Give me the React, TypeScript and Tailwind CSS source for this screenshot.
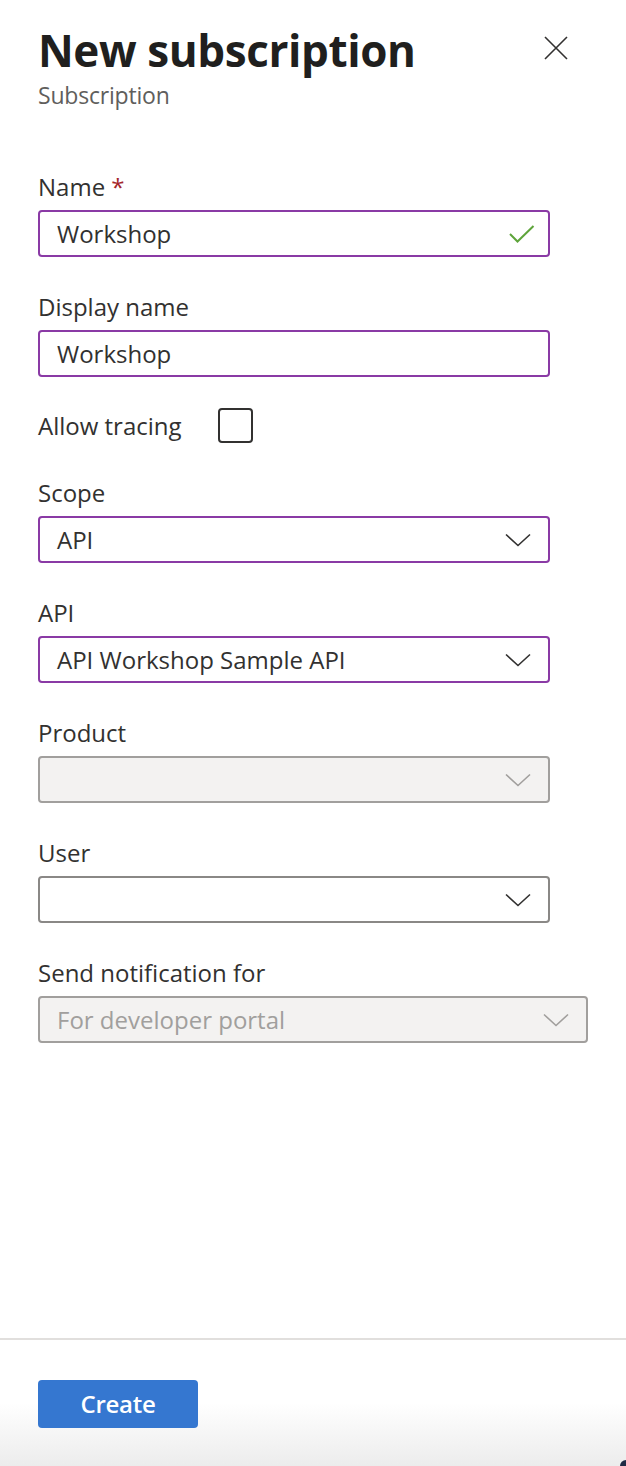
import React from "react";

const font = { fontFamily: '"Open Sans", "Noto Sans", sans-serif' };

function Chevron({ color }: { color: string }) {
  return (
    <svg width="26" height="14" viewBox="0 0 26 14" fill="none">
      <path d="M1 1.5 L13 12.5 L25 1.5" stroke={color} strokeWidth="1.6" />
    </svg>
  );
}

function Label({ children }: { children: React.ReactNode }) {
  return <div className="text-[24px] leading-[30px] text-[#323130]">{children}</div>;
}

function Field({
  value,
  variant = "active",
  wide = false,
  chevron = true,
  check = false,
}: {
  value?: string;
  variant?: "active" | "disabled" | "plain";
  wide?: boolean;
  chevron?: boolean;
  check?: boolean;
}) {
  const border =
    variant === "active"
      ? "border-[#8a3aa5] bg-white"
      : variant === "disabled"
      ? "border-[#a19f9d] bg-[#f3f2f1]"
      : "border-[#8a8886] bg-white";
  return (
    <div
      className={`mt-2 h-[47px] ${wide ? "w-[550px]" : "w-[512px]"} rounded-[4px] border-2 ${border} flex items-center pl-[17px] pr-[17px]`}
    >
      <div className={`flex-1 text-[24px] ${variant === "disabled" ? "text-[#a19f9d]" : "text-[#323130]"}`}>
        {value}
      </div>
      {chevron && <Chevron color={variant === "disabled" ? "#a19f9d" : "#323130"} />}
      {check && (
        <svg width="26" height="18" viewBox="0 0 26 18" fill="none" className="mr-[-4px]">
          <path d="M1 9 L8.5 16.5 L24.5 1" stroke="#5ea43b" strokeWidth="2" />
        </svg>
      )}
    </div>
  );
}

export default function App() {
  return (
    <div className="relative w-[626px] h-[1466px] bg-white overflow-hidden flex flex-col" style={font}>
      <div className="flex-1 pl-[38px]">
        <div className="flex items-start justify-between pr-[58px] pt-[23px]">
          <div className="text-[44px] leading-[54px] font-bold text-[#201f1e] tracking-[-0.4px]">New subscription</div>
          <svg width="24" height="24" viewBox="0 0 24 24" className="mt-[13px]" fill="none">
            <path d="M1 1 L23 23 M23 1 L1 23" stroke="#323130" strokeWidth="1.6" />
          </svg>
        </div>
        <div className="text-[23px] leading-[30px] text-[#605e5c] tracking-[-0.2px] mt-[3px]">Subscription</div>

        <div className="mt-[62px]">
          <Label>
            Name <span className="text-[#a4262c]">*</span>
          </Label>
          <Field value="Workshop" chevron={false} check />
        </div>

        <div className="mt-[35px]">
          <Label>Display name</Label>
          <Field value="Workshop" chevron={false} />
        </div>

        <div className="mt-[31px] flex items-center">
          <div className="text-[24px] leading-[30px] text-[#323130] w-[180px]">Allow tracing</div>
          <div className="w-[35px] h-[35px] rounded-[4px] border-2 border-[#323130]" />
        </div>

        <div className="mt-[35px]">
          <Label>Scope</Label>
          <Field value="API" />
        </div>

        <div className="mt-[35px]">
          <Label>API</Label>
          <Field value="API Workshop Sample API" />
        </div>

        <div className="mt-[35px]">
          <Label>Product</Label>
          <Field variant="disabled" />
        </div>

        <div className="mt-[35px]">
          <Label>User</Label>
          <Field variant="plain" />
        </div>

        <div className="mt-[35px]">
          <Label>Send notification for</Label>
          <Field variant="disabled" value="For developer portal" wide />
        </div>
      </div>

      <div className="h-[128px] border-t-2 border-[#e1dfdd] bg-gradient-to-b from-white via-white to-[#ececec] pl-[38px] pt-[40px]">
        <button className="w-[160px] h-[48px] rounded-[4px] bg-[#3577d0] text-white text-[24px] font-semibold tracking-[-0.3px]">
          Create
        </button>
      </div>
      <div className="absolute right-0 bottom-0 w-[6px] h-[6px] bg-[#1e2a44] rounded-tl-[6px]" />
    </div>
  );
}
